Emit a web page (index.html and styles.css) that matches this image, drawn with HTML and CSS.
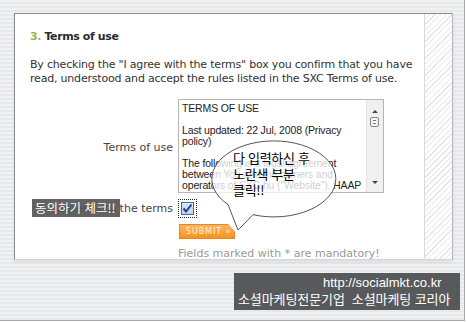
FILE: index.html
```html
<!DOCTYPE html>
<html lang="ko">
<head>
    <meta charset="UTF-8">
    <meta name="viewport" content="width=device-width, initial-scale=1.0">
    <title>Terms of use</title>
    <link rel="stylesheet" href="styles.css">
</head>
<body>
    <div class="frame">
        <div class="panel">
            <div class="content">
                <h2><span class="step">3.</span> Terms of use</h2>
                <p class="intro">By checking the "I agree with the terms" box you confirm that you have<br>read, understood and accept the rules listed in the SXC Terms of use.</p>

                <div class="row terms-row">
                    <label class="label">Terms of use</label>
                    <div class="terms-box">
                        <div class="terms-text">
                            <p>TERMS OF USE</p>
                            <p>Last updated: 22 Jul, 2008 (Privacy policy)</p>
                            <p>The following is a legal agreement between You and the owners and operators of SXC.hu ("Website"), HAAP Media Ltd.</p>
                        </div>
                        <div class="scrollbar">
                            <span class="arrow up"></span>
                            <span class="thumb"></span>
                            <span class="arrow down"></span>
                        </div>
                    </div>
                </div>

                <div class="row agree-row">
                    <label class="label">I agree with the terms</label>
                    <span class="check-focus">
                        <span class="checkbox">
                            <svg width="11" height="11" viewBox="0 0 11 11">
                                <path d="M1.5 5.5 L4 8.5 L9.5 1.5" fill="none" stroke="#1d3f86" stroke-width="2"/>
                            </svg>
                        </span>
                    </span>
                </div>

                <div class="row submit-row">
                    <button class="submit">SUBMIT &raquo;</button>
                </div>

                <p class="note">Fields marked with * are mandatory!</p>

                <div class="tag">동의하기 체크!!</div>

                <div class="bubble">
                    <svg class="bubble-shape" width="145" height="100" viewBox="0 0 145 100">
                        <path d="M28 66.5 L38 92 L53 76.7 A62 38 0 1 0 28 66.5 Z" fill="rgba(255,255,255,0.78)" stroke="#555" stroke-width="1"/>
                    </svg>
                    <div class="bubble-text">다 입력하신 후<br>노란색 부분<br>클릭!!</div>
                </div>
            </div>
            <div class="hatch"></div>
        </div>

        <div class="caption">
            <div class="url">http://socialmkt.co.kr</div>
            <div class="company">소셜마케팅전문기업&nbsp; 소셜마케팅 코리아</div>
        </div>
    </div>
</body>
</html>
```

FILE: styles.css
```css
body {
    margin: 0;
    width: 467px;
    height: 322px;
    overflow: hidden;
    font-family: 'DejaVu Sans', Verdana, sans-serif;
    background: #fff;
}

.frame {
    box-sizing: border-box;
    width: 465px;
    height: 321px;
    padding: 13px 0 0 14px;
    border-right: 1px solid #a8a8a8;
    border-bottom: 1px solid #a8a8a8;
    background: repeating-linear-gradient(180deg, #eef0f2 0, #eef0f2 2px, #e6e8eb 2px, #e6e8eb 4px);
}

.panel {
    display: flex;
    width: 439px;
    height: 247px;
    box-sizing: border-box;
    background: #fff;
    border-top: 1px solid #8c8c8c;
    border-left: 1px solid #8c8c8c;
    border-right: 1px solid #b8b8b8;
    border-bottom: 1px solid #d4d4d4;
    box-shadow: 0 2px 3px rgba(0, 0, 0, 0.08);
    overflow: hidden;
}

.content {
    position: relative;
    flex: none;
    width: 410px;
    padding: 0 0 0 15px;
    box-sizing: border-box;
    border-right: 1px solid #d9d9d9;
    color: #333;
}

.hatch {
    flex: 1;
    background: repeating-linear-gradient(135deg, #fff 0, #fff 3px, #e6e6e6 3px, #e6e6e6 4px);
}

h2 {
    margin: 15px 0 0;
    font-size: 11px;
    line-height: 16px;
    font-weight: bold;
    letter-spacing: -0.4px;
    color: #2b2b2b;
}

.step {
    color: #9ab64c;
}

.intro {
    margin: 13px -20px 0 0;
    font-size: 11px;
    line-height: 14px;
    white-space: nowrap;
    letter-spacing: -0.2px;
    color: #333;
}

.row {
    display: flex;
    align-items: center;
    gap: 5px;
    font-size: 11px;
}

.label {
    width: 143px;
    text-align: right;
    color: #444;
}

.terms-row {
    margin-top: 13px;
}

.terms-row .label {
    padding-top: 2px;
}

.terms-box {
    display: flex;
    width: 206px;
    height: 94px;
    box-sizing: border-box;
    border: 1px solid #b5b5b5;
    background: #fff;
}

.terms-text {
    flex: 1;
    padding: 3px 3px;
    overflow: hidden;
    font-family: 'Liberation Sans', Arial, sans-serif;
    font-size: 10.5px;
    line-height: 11px;
    letter-spacing: -0.15px;
    color: #222;
}

.terms-text p {
    margin: 0 0 11px;
}

.scrollbar {
    position: relative;
    width: 16px;
    background: #f0f0f0;
    border-left: 1px solid #e4e4e4;
}

.arrow {
    position: absolute;
    left: 5px;
    width: 0;
    height: 0;
    border-left: 3px solid transparent;
    border-right: 3px solid transparent;
}

.arrow.up {
    top: 10px;
    border-bottom: 3px solid #444;
}

.arrow.down {
    bottom: 8px;
    border-top: 3px solid #444;
}

.thumb {
    position: absolute;
    top: 17px;
    left: 3px;
    width: 9px;
    height: 10px;
    border: 1px solid #8a8a8a;
    border-radius: 2px;
    background: repeating-linear-gradient(180deg, #fafafa 0, #fafafa 2px, #777 2px, #777 3px);
    background-clip: content-box;
    padding: 1px 2px;
    box-sizing: border-box;
}

.agree-row {
    margin-top: 6px;
}

.check-focus {
    margin-left: 0;
    padding: 2px;
    border: 1px dotted #222;
}

.checkbox {
    display: flex;
    align-items: center;
    justify-content: center;
    width: 13px;
    height: 13px;
    box-sizing: border-box;
    border: 1px solid #3d6c9e;
    background: linear-gradient(#dbe8f6, #bcd2ea);
}

.submit-row {
    margin-top: 6px;
    padding-left: 149px;
}

.submit {
    width: 56px;
    height: 15px;
    padding: 0 0 0 6px;
    border: 1px solid #e08a2c;
    background: linear-gradient(#ffb45a, #f7931f);
    color: #fff4e0;
    font-family: 'DejaVu Sans', sans-serif;
    font-size: 8px;
    letter-spacing: 0.9px;
    text-align: left;
    white-space: nowrap;
    clip-path: polygon(0 0, 88% 0, 100% 50%, 100% 100%, 0 100%);
}

.note {
    margin: 8px 0 0 148px;
    font-size: 11px;
    color: #999;
}

.tag {
    position: absolute;
    left: 17px;
    top: 185px;
    width: 88px;
    height: 18px;
    background: rgba(85, 85, 85, 0.92);
    color: #fff;
    font-family: 'Noto Sans CJK KR', sans-serif;
    font-size: 12.5px;
    line-height: 18px;
    padding-left: 3px;
    box-sizing: border-box;
}

.bubble {
    position: absolute;
    left: 185px;
    top: 124px;
    width: 145px;
    height: 100px;
}

.bubble-shape {
    position: absolute;
    left: 0;
    top: 0;
}

.bubble-text {
    position: absolute;
    left: 33px;
    top: 12px;
    font-family: 'Noto Sans CJK KR', sans-serif;
    font-size: 13px;
    line-height: 16px;
    letter-spacing: -0.3px;
    white-space: nowrap;
    color: #000;
}

.caption {
    margin: 13px 0 0 220px;
    width: 226px;
    height: 37px;
    padding: 2px 0 0 4px;
    box-sizing: border-box;
    background: #58595b;
    color: #fff;
    font-family: 'Noto Sans CJK KR', sans-serif;
}

.url {
    padding-left: 85px;
    font-family: 'Liberation Sans', sans-serif;
    font-size: 13px;
    line-height: 16px;
}

.company {
    font-size: 13px;
    line-height: 16px;
    letter-spacing: -0.1px;
}
```
